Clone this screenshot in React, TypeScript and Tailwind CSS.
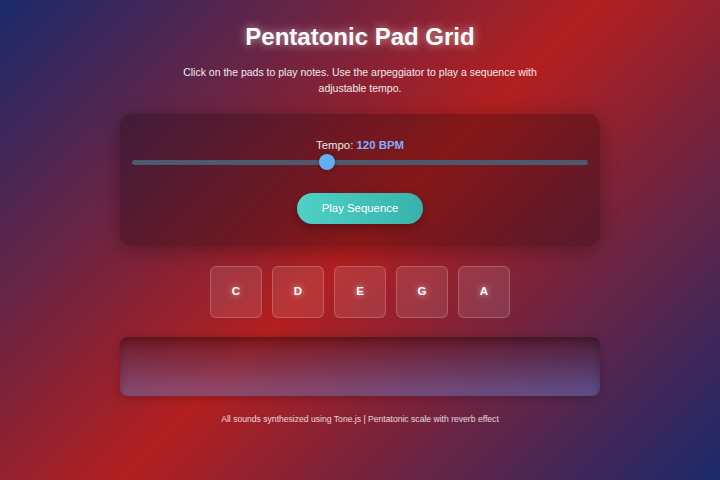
import React, { useState } from 'react';

const notes = ['C', 'D', 'E', 'G', 'A'];

const App: React.FC = () => {
  const [tempo, setTempo] = useState(120);
  const pct = ((tempo - 60) / (200 - 60)) * 100;

  return (
    <div
      className="min-h-screen w-full flex flex-col items-center text-white bg-[linear-gradient(135deg,#1a2a6c_0%,#b21f1f_50%,#1a2a6c_100%)]"
      style={{ fontFamily: '"Liberation Sans", Arial, sans-serif' }}
    >
      <h1 className="mt-[22px] text-[24px] font-bold leading-[30px] [text-shadow:0_0_10px_rgba(255,255,255,0.6)]">
        Pentatonic Pad Grid
      </h1>
      <p className="mt-[12px] w-[380px] text-center text-[10.5px] leading-[16px] text-white/90">
        Click on the pads to play notes. Use the arpeggiator to play a sequence with adjustable tempo.
      </p>

      <div className="mt-[18px] w-[480px] rounded-xl bg-black/25 px-3 pt-[23px] pb-[22px] shadow-[0_4px_20px_rgba(0,0,0,0.3)] flex flex-col items-center">
        <div className="text-[11.4px] leading-[16px] text-white/90">
          Tempo: <span className="font-bold text-[#7fb0ff]">120 BPM</span>
        </div>
        <div className="relative mt-[1px] h-[16px] w-full">
          <div className="absolute left-0 right-0 top-[5.5px] h-[5px] rounded-full bg-[#4d5a6e]" />
          <div
            className="absolute top-0 h-[16px] w-[16px] -translate-x-1/2 rounded-full bg-[#62aef0] shadow-[0_0_4px_rgba(0,0,0,0.3)]"
            style={{ left: `${pct}%` }}
          />
          <input
            type="range"
            min={60}
            max={200}
            value={tempo}
            onChange={e => setTempo(Number(e.target.value))}
            className="absolute inset-0 w-full opacity-0 cursor-pointer"
          />
        </div>
        <button className="mt-[23px] h-[31px] w-[126px] rounded-full bg-[linear-gradient(90deg,#4fd1c5,#38b2ac)] text-[11.4px] text-white shadow-[0_4px_10px_rgba(0,0,0,0.25)]">
          Play Sequence
        </button>
      </div>

      <div className="mt-[20px] flex gap-[10px]">
        {notes.map(n => (
          <button
            key={n}
            className="h-[52px] w-[52px] rounded-md border border-white/20 bg-white/10 text-[11.5px] font-bold text-white [text-shadow:0_0_6px_rgba(255,255,255,0.7)]"
          >
            {n}
          </button>
        ))}
      </div>

      <div className="mt-[19px] h-[59px] w-[480px] rounded-lg bg-[linear-gradient(180deg,rgba(50,10,20,0.35)_0%,rgba(110,130,210,0.45)_100%)] shadow-[inset_0_3px_8px_rgba(0,0,0,0.25),0_2px_10px_rgba(0,0,0,0.2)]" />

      <p className="mt-[17px] text-[8.6px] leading-[12px] text-white/80">
        All sounds synthesized using Tone.js | Pentatonic scale with reverb effect
      </p>
    </div>
  );
};

export default App;
